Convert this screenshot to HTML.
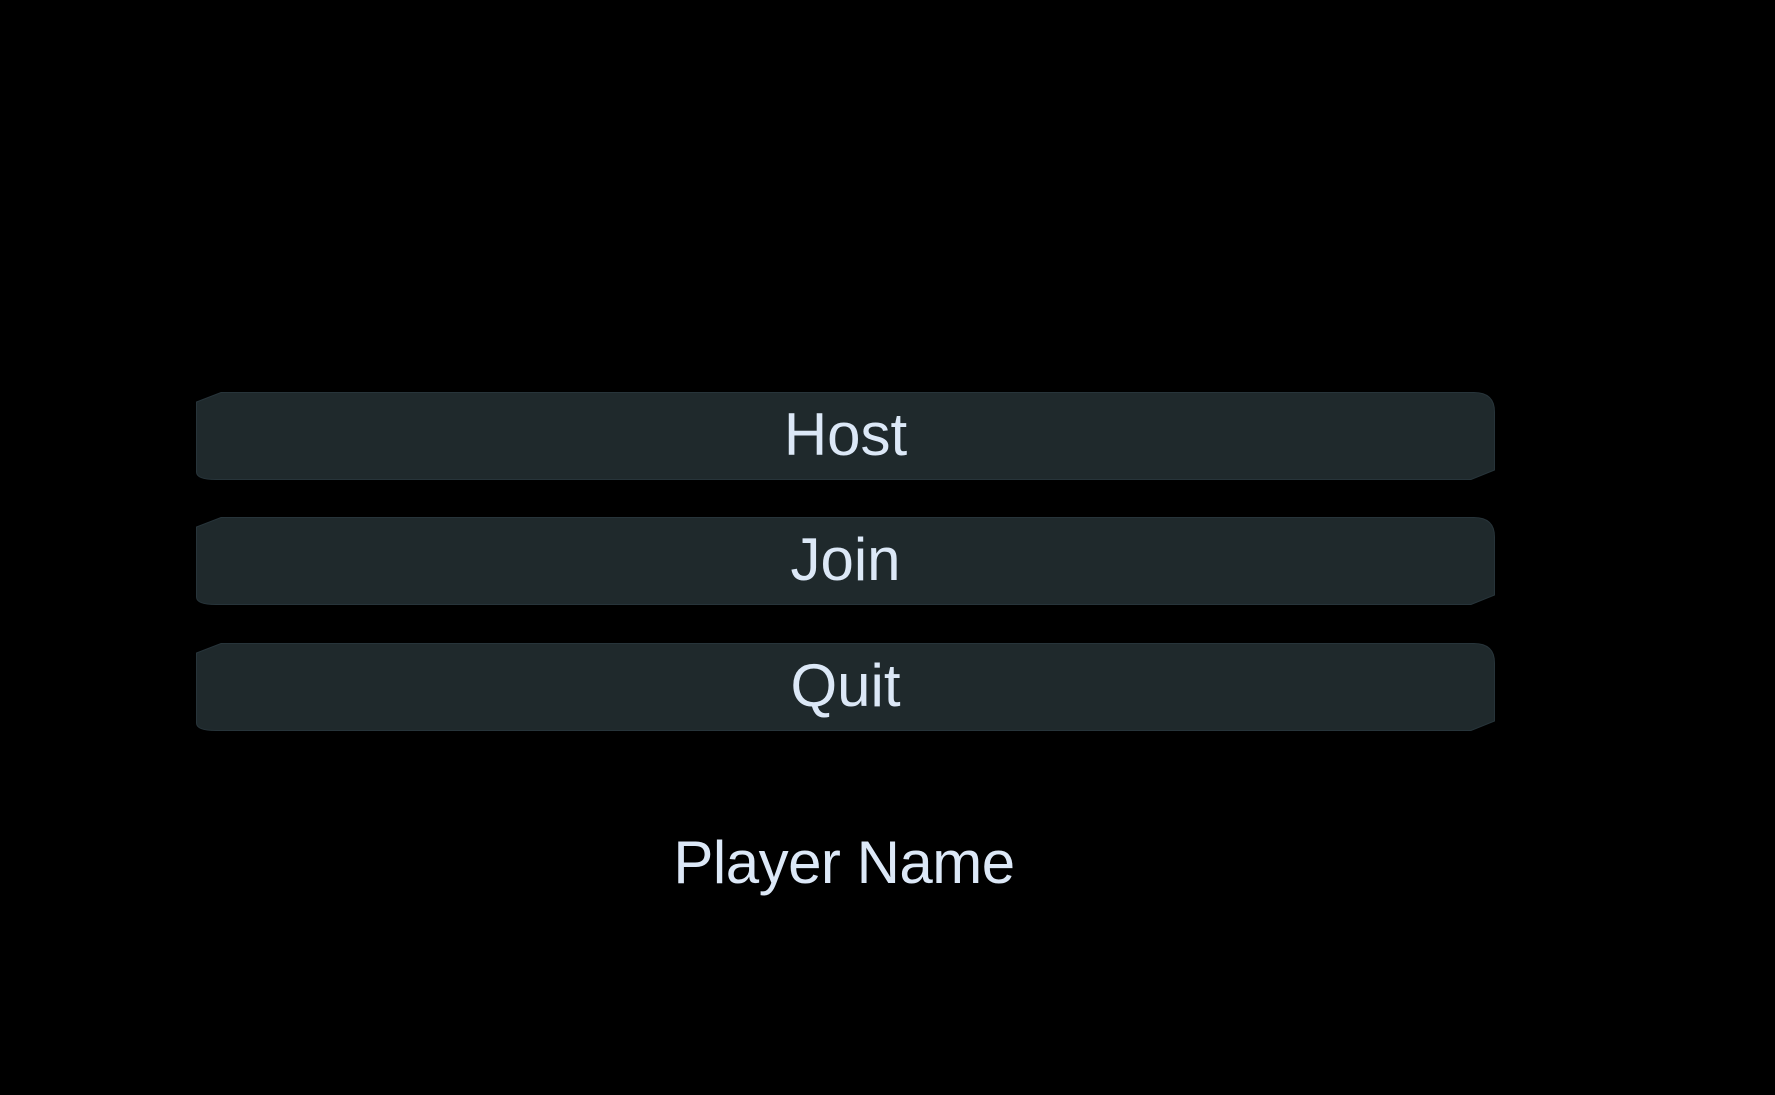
<!DOCTYPE html>
<html><head><style>
html,body{margin:0;padding:0;background:#000;width:1775px;height:1095px;overflow:hidden;font-family:"Liberation Sans",sans-serif;}
.btn{position:absolute;left:196px;width:1299px;height:88px;}
.btn svg{position:absolute;left:0;top:0;}
.btn span{position:absolute;left:0;right:0;top:0;bottom:0;display:flex;align-items:center;justify-content:center;color:#dce8f7;font-size:60px;padding-bottom:3px;}
.pn{position:absolute;left:0;width:1688px;text-align:center;top:828px;color:#dce8f7;font-size:60px;letter-spacing:-0.5px;}
</style></head><body>
<div class="btn" style="top:392px"><svg width="1299" height="88"><path d="M0.5 10 L25 0.5 H1278 Q1298.5 0.5 1298.5 20 V78 L1275 87.5 H20 Q0.5 87.5 0.5 80 Z" fill="#1f292c" stroke="#27343a"/></svg><span>Host</span></div>
<div class="btn" style="top:517px"><svg width="1299" height="88"><path d="M0.5 10 L25 0.5 H1278 Q1298.5 0.5 1298.5 20 V78 L1275 87.5 H20 Q0.5 87.5 0.5 80 Z" fill="#1f292c" stroke="#27343a"/></svg><span>Join</span></div>
<div class="btn" style="top:643px"><svg width="1299" height="88"><path d="M0.5 10 L25 0.5 H1278 Q1298.5 0.5 1298.5 20 V78 L1275 87.5 H20 Q0.5 87.5 0.5 80 Z" fill="#1f292c" stroke="#27343a"/></svg><span>Quit</span></div>
<div class="pn">Player Name</div>
</body></html>
